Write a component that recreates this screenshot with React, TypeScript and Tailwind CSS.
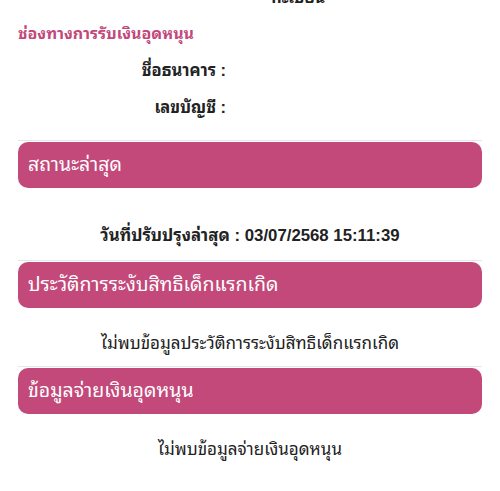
import React from "react";

const Bar = ({ title }: { title: string }) => (
  <div className="mx-[18px] border-t border-[#e6e6e6] pt-px">
    <div className="h-[46px] rounded-[10px] bg-[#c2497a] pl-[10px] flex items-center text-white text-[19.5px] leading-none">
      {title}
    </div>
  </div>
);

export default function App() {
  return (
    <div className="w-[500px] h-[491px] overflow-hidden bg-white text-[#222] font-['Liberation_Sans','Noto_Sans_Thai_Looped',sans-serif]">
      <div className="h-[8px] flex justify-center overflow-hidden">
        <div className="ml-[96px] -mt-[10px] font-bold text-[16px] leading-none">ทะเบียน</div>
      </div>
      <div className="pl-[18px] pt-[14px] text-[16px] font-bold text-[#c2477a] leading-[24px]">
        ช่องทางการรับเงินอุดหนุน
      </div>
      <div className="w-[226px] text-right font-bold text-[16.5px] mt-[12px] leading-[24px]">ชื่อธนาคาร :</div>
      <div className="w-[226px] text-right font-bold text-[16.5px] mt-[13px] leading-[24px]">เลขบัญชี :</div>
      <div className="mt-[21px]">
        <Bar title="สถานะล่าสุด" />
      </div>
      <div className="text-center font-bold text-[16.8px] mt-[36px] leading-[24px]">
        วันที่ปรับปรุงล่าสุด : 03/07/2568 15:11:39
      </div>
      <div className="mt-[12px]">
        <Bar title="ประวัติการระงับสิทธิเด็กแรกเกิด" />
      </div>
      <div className="text-center text-[17px] mt-[24px] leading-[24px]">
        ไม่พบข้อมูลประวัติการระงับสิทธิเด็กแรกเกิด
      </div>
      <div className="mt-[10px]">
        <Bar title="ข้อมูลจ่ายเงินอุดหนุน" />
      </div>
      <div className="text-center text-[17px] mt-[24px] leading-[24px]">ไม่พบข้อมูลจ่ายเงินอุดหนุน</div>
    </div>
  );
}
